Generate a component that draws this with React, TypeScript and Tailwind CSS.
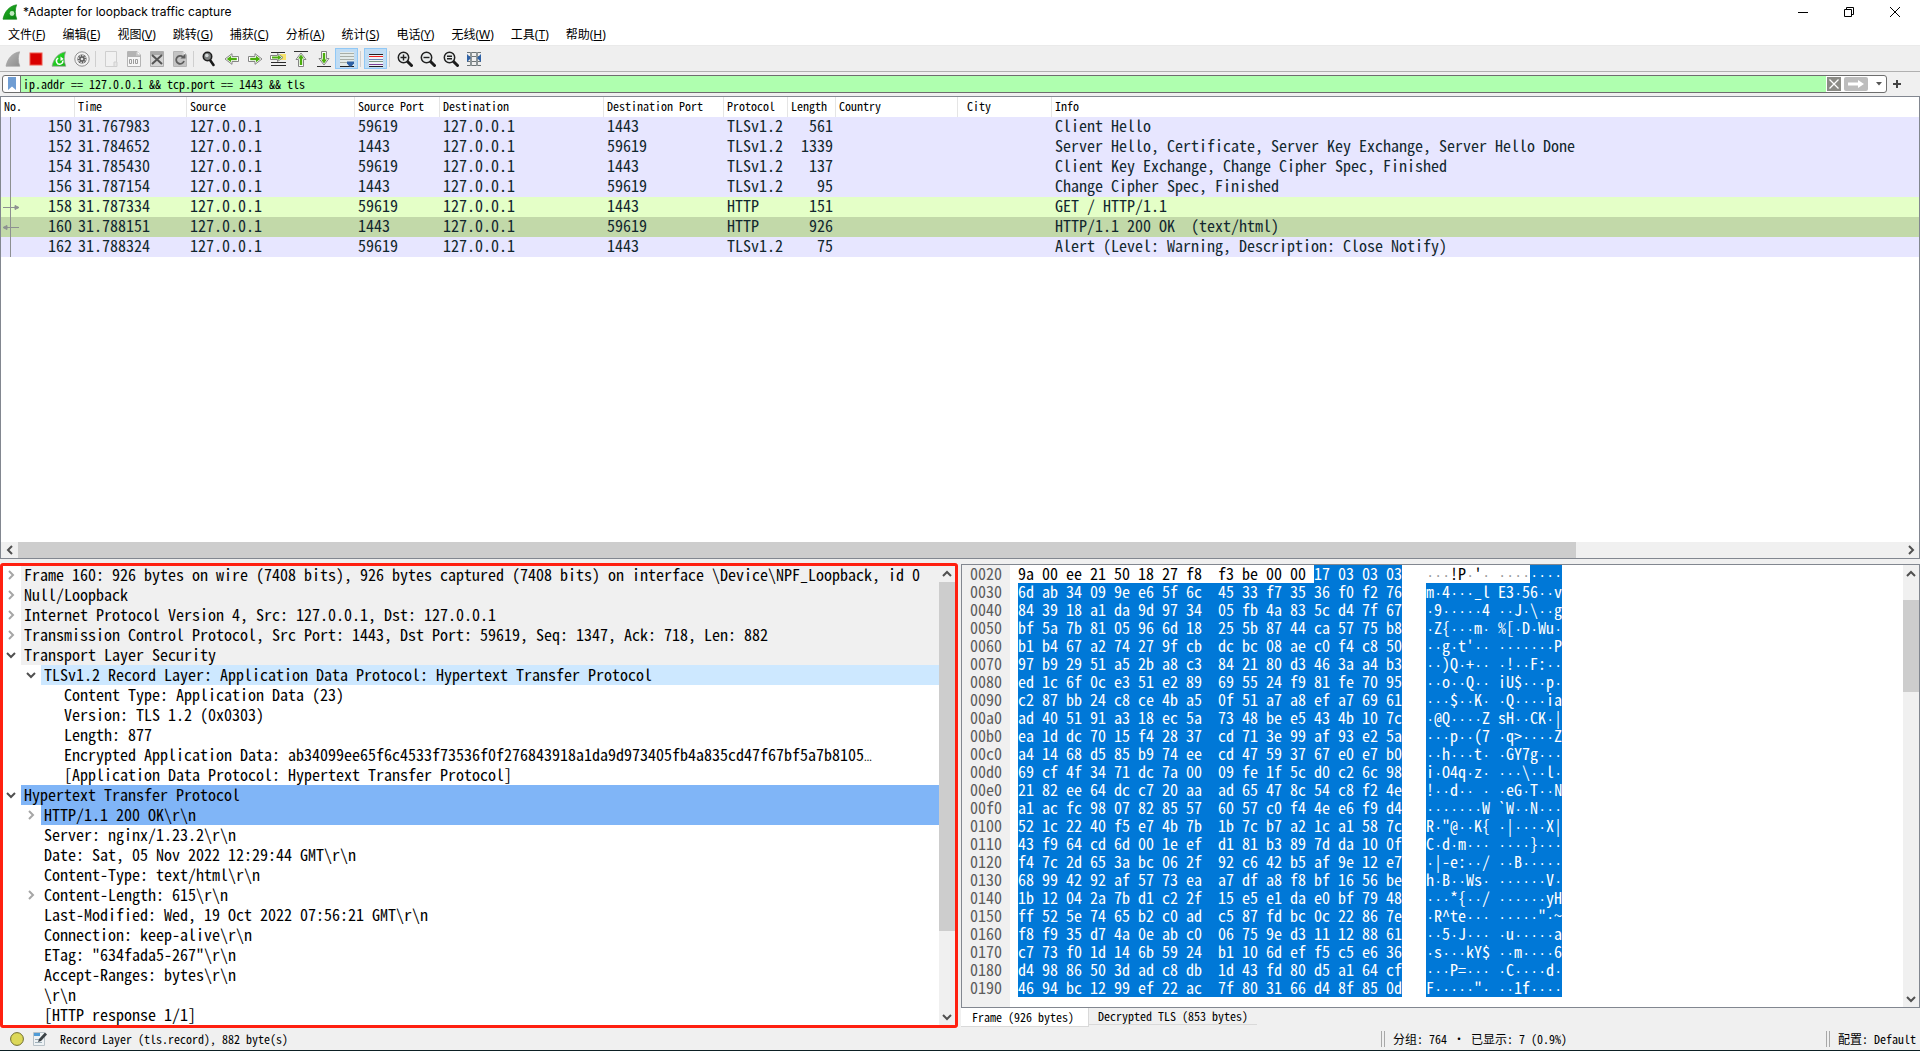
import { useState } from 'react';
import type { ReactNode } from 'react';

const MONO = "font-['Noto_Sans_Mono_CJK_SC','Liberation_Mono',monospace]";
const UI = "font-['Noto_Sans','Noto_Sans_CJK_SC',sans-serif]";

const MENUS = [
  ['文件', 'F'], ['编辑', 'E'], ['视图', 'V'], ['跳转', 'G'], ['捕获', 'C'], ['分析', 'A'],
  ['统计', 'S'], ['电话', 'Y'], ['无线', 'W'], ['工具', 'T'], ['帮助', 'H'],
];

const COLUMNS = [
  { name: 'No.', width: 'w-[74px]' },
  { name: 'Time', width: 'w-[112px]' },
  { name: 'Source', width: 'w-[168px]' },
  { name: 'Source Port', width: 'w-[85px]' },
  { name: 'Destination', width: 'w-[164px]' },
  { name: 'Destination Port', width: 'w-[120px]' },
  { name: 'Protocol', width: 'w-[64px]' },
  { name: 'Length', width: 'w-[48px]' },
  { name: 'Country', width: 'w-[122px]' },
  { name: 'City', width: 'w-[94px]' },
  { name: 'Info', width: '' },
];

interface Packet {
  no: number;
  time: string;
  sport: string;
  dport: string;
  protocol: string;
  length: number;
  info: string;
  row: string;
  arrow?: 'out' | 'in';
}

const PACKETS: Packet[] = [
  { no: 150, time: '31.767983', sport: '59619', dport: '1443', protocol: 'TLSv1.2', length: 561, info: 'Client Hello', row: 'bg-[#e7e6ff]' },
  { no: 152, time: '31.784652', sport: '1443', dport: '59619', protocol: 'TLSv1.2', length: 1339, info: 'Server Hello, Certificate, Server Key Exchange, Server Hello Done', row: 'bg-[#e7e6ff]' },
  { no: 154, time: '31.785430', sport: '59619', dport: '1443', protocol: 'TLSv1.2', length: 137, info: 'Client Key Exchange, Change Cipher Spec, Finished', row: 'bg-[#e7e6ff]' },
  { no: 156, time: '31.787154', sport: '1443', dport: '59619', protocol: 'TLSv1.2', length: 95, info: 'Change Cipher Spec, Finished', row: 'bg-[#e7e6ff]' },
  { no: 158, time: '31.787334', sport: '59619', dport: '1443', protocol: 'HTTP', length: 151, info: 'GET / HTTP/1.1', row: 'bg-[#e4ffc7]', arrow: 'out' },
  { no: 160, time: '31.788151', sport: '1443', dport: '59619', protocol: 'HTTP', length: 926, info: 'HTTP/1.1 200 OK  (text/html)', row: 'bg-[#c2d9a9]', arrow: 'in' },
  { no: 162, time: '31.788324', sport: '59619', dport: '1443', protocol: 'TLSv1.2', length: 75, info: 'Alert (Level: Warning, Description: Close Notify)', row: 'bg-[#e7e6ff]' },
];

interface TreeLine {
  level: number;
  text: string;
  state?: 'open' | 'closed';
  tone?: string;
}

const GRAY = 'bg-[#f0f0f0]';
const BLUE = 'bg-[#80b5f7]';

const TREE: TreeLine[] = [
  { level: 0, state: 'closed', tone: GRAY, text: 'Frame 160: 926 bytes on wire (7408 bits), 926 bytes captured (7408 bits) on interface \\Device\\NPF_Loopback, id 0' },
  { level: 0, state: 'closed', tone: GRAY, text: 'Null/Loopback' },
  { level: 0, state: 'closed', tone: GRAY, text: 'Internet Protocol Version 4, Src: 127.0.0.1, Dst: 127.0.0.1' },
  { level: 0, state: 'closed', tone: GRAY, text: 'Transmission Control Protocol, Src Port: 1443, Dst Port: 59619, Seq: 1347, Ack: 718, Len: 882' },
  { level: 0, state: 'open', tone: GRAY, text: 'Transport Layer Security' },
  { level: 1, state: 'open', tone: 'bg-[#cde8ff]', text: 'TLSv1.2 Record Layer: Application Data Protocol: Hypertext Transfer Protocol' },
  { level: 2, text: 'Content Type: Application Data (23)' },
  { level: 2, text: 'Version: TLS 1.2 (0x0303)' },
  { level: 2, text: 'Length: 877' },
  { level: 2, text: 'Encrypted Application Data: ab34099ee65f6c4533f73536f0f276843918a1da9d973405fb4a835cd47f67bf5a7b8105…' },
  { level: 2, text: '[Application Data Protocol: Hypertext Transfer Protocol]' },
  { level: 0, state: 'open', tone: BLUE, text: 'Hypertext Transfer Protocol' },
  { level: 1, state: 'closed', tone: BLUE, text: 'HTTP/1.1 200 OK\\r\\n' },
  { level: 1, text: 'Server: nginx/1.23.2\\r\\n' },
  { level: 1, text: 'Date: Sat, 05 Nov 2022 12:29:44 GMT\\r\\n' },
  { level: 1, text: 'Content-Type: text/html\\r\\n' },
  { level: 1, state: 'closed', text: 'Content-Length: 615\\r\\n' },
  { level: 1, text: 'Last-Modified: Wed, 19 Oct 2022 07:56:21 GMT\\r\\n' },
  { level: 1, text: 'Connection: keep-alive\\r\\n' },
  { level: 1, text: 'ETag: "634fada5-267"\\r\\n' },
  { level: 1, text: 'Accept-Ranges: bytes\\r\\n' },
  { level: 1, text: '\\r\\n' },
  { level: 1, text: '[HTTP response 1/1]' },
];

const INDENT = ['pl-0', 'pl-5', 'pl-10'];

const DUMP = [
  '9a 00 ee 21 50 18 27 f8 f3 be 00 00 17 03 03 03',
  '6d ab 34 09 9e e6 5f 6c 45 33 f7 35 36 f0 f2 76',
  '84 39 18 a1 da 9d 97 34 05 fb 4a 83 5c d4 7f 67',
  'bf 5a 7b 81 05 96 6d 18 25 5b 87 44 ca 57 75 b8',
  'b1 b4 67 a2 74 27 9f cb dc bc 08 ae c0 f4 c8 50',
  '97 b9 29 51 a5 2b a8 c3 84 21 80 d3 46 3a a4 b3',
  'ed 1c 6f 0c e3 51 e2 89 69 55 24 f9 81 fe 70 95',
  'c2 87 bb 24 c8 ce 4b a5 0f 51 a7 a8 ef a7 69 61',
  'ad 40 51 91 a3 18 ec 5a 73 48 be e5 43 4b 10 7c',
  'ea 1d dc 70 15 f4 28 37 cd 71 3e 99 af 93 e2 5a',
  'a4 14 68 d5 85 b9 74 ee cd 47 59 37 67 e0 e7 b0',
  '69 cf 4f 34 71 dc 7a 00 09 fe 1f 5c d0 c2 6c 98',
  '21 82 ee 64 dc c7 20 aa ad 65 47 8c 54 c8 f2 4e',
  'a1 ac fc 98 07 82 85 57 60 57 c0 f4 4e e6 f9 d4',
  '52 1c 22 40 f5 e7 4b 7b 1b 7c b7 a2 1c a1 58 7c',
  '43 f9 64 cd 6d 00 1e ef d1 81 b3 89 7d da 10 0f',
  'f4 7c 2d 65 3a bc 06 2f 92 c6 42 b5 af 9e 12 e7',
  '68 99 42 92 af 57 73 ea a7 df a8 f8 bf 16 56 be',
  '1b 12 04 2a 7b d1 c2 2f 15 e5 e1 da e0 bf 79 48',
  'ff 52 5e 74 65 b2 c0 ad c5 87 fd bc 0c 22 86 7e',
  'f8 f9 35 d7 4a 0e ab c0 06 75 9e d3 11 12 88 61',
  'c7 73 f0 1d 14 6b 59 24 b1 10 6d ef f5 c5 e6 36',
  'd4 98 86 50 3d ad c8 db 1d 43 fd 80 d5 a1 64 cf',
  '46 94 bc 12 99 ef 22 ac 7f 80 31 66 d4 8f 85 0d',
];

// offset 0x20, the TLS record starts 12 bytes in
const FIRST_OFFSET = 0x20;
const RECORD_START = 12;

const toHex = (row: string) => {
  const bytes = row.split(' ');
  return bytes.slice(0, 8).join(' ') + '  ' + bytes.slice(8).join(' ');
};

const toAscii = (row: string) => {
  const chars = row.split(' ').map((b) => {
    const code = parseInt(b, 16);
    return code >= 0x20 && code < 0x7f ? String.fromCharCode(code) : '·';
  });
  return chars.slice(0, 8).join('') + ' ' + chars.slice(8).join('');
};

function Glyph({ children }: { children: ReactNode }) {
  return (
    <svg viewBox="0 0 16 16" className="h-4 w-4" fill="none">
      {children}
    </svg>
  );
}

function Fin({ from, to, stroke }: { from: string; to: string; stroke: string }) {
  const id = `fin${from.slice(1)}`;
  return (
    <>
      <defs>
        <linearGradient id={id} x1="0" y1="0" x2="1" y2="1">
          <stop offset="0" stopColor={from} />
          <stop offset="1" stopColor={to} />
        </linearGradient>
      </defs>
      <path d="M1 15.2C2.4 8 7 2 14.6.8c-1.6 4-1.8 9.6.2 14.4z" fill={`url(#${id})`} stroke={stroke} strokeWidth=".7" />
    </>
  );
}

function Page({ children }: { children?: ReactNode }) {
  return (
    <>
      <path d="M1.5.5H11L14.5 4v11.5h-13z" fill="#f6f6f6" stroke="#b4b4b4" />
      <path d="M11 .5V4h3.5" stroke="#b4b4b4" fill="#fff" />
      {children}
    </>
  );
}

function Lens({ children }: { children?: ReactNode }) {
  return (
    <Glyph>
      <path d="M10 10l4.5 4.5" stroke="#1c1c1c" strokeWidth="3" strokeLinecap="round" />
      <circle cx="6.5" cy="6.5" r="5.2" fill="#e9ecec" stroke="#222" strokeWidth="1.5" />
      <g stroke="#222" strokeWidth="1.4">{children}</g>
    </Glyph>
  );
}

function ArrowShape() {
  return (
    <>
      <path d="M1.5 5.5H8V2.700L15 8l-7 5.300V10.500H1.500z" fill="#fff" stroke="#858585" />
      <path d="M3.200 8H10" stroke="#4cae0f" strokeWidth="2.400" />
      <path d="M9 4.800L13.200 8 9 11.200z" fill="#4cae0f" />
    </>
  );
}

const ICONS: Record<string, ReactNode> = {
  start: <Glyph><Fin from="#b9b9b9" to="#8d8d8d" stroke="#a0a0a0" /></Glyph>,
  stop: <Glyph><rect x="2" y="2" width="12" height="12" fill="#d90000" stroke="#ef5a4e" /></Glyph>,
  restart: (
    <Glyph>
      <Fin from="#2ee62e" to="#10b410" stroke="#9a9a9a" />
      <path d="M7.2 7.2A3.2 3.2 0 1 0 11.8 9.5" stroke="#fff" strokeWidth="1.5" />
      <path d="M9.5 5.5V10l3.2-2z" fill="#fff" />
    </Glyph>
  ),
  options: (
    <Glyph>
      <circle cx="8" cy="8" r="7.2" fill="#f2f2f2" stroke="#909090" />
      <circle cx="8" cy="8" r="4.6" fill="#5c5c5c" />
      <circle cx="8" cy="8" r="3.5" stroke="#d4d4d4" strokeWidth="1.4" strokeDasharray="1.6 1.1" />
      <circle cx="8" cy="8" r="1.3" fill="#e4e4e4" />
    </Glyph>
  ),
  open: (
    <Glyph>
      <path d="M2.5.5h11v15h-11z" fill="#f1f1f1" stroke="#cfcfcf" />
      <path d="M11 11h3v4.5h-3z" fill="#e6e6e6" stroke="#cfcfcf" />
    </Glyph>
  ),
  save: (
    <Glyph>
      <Page>
        <path d="M2 1h8.5v3.5H14V6H2z" fill="#b3b3b3" />
        <path d="M3.5 8.5h2v4h-2zM7.5 8v5M9.5 8.5h2v4h-2z" stroke="#9d9d9d" />
      </Page>
    </Glyph>
  ),
  close: (
    <Glyph>
      <path d="M1.5.5h13v15h-13z" fill="#d4d4d4" stroke="#adadad" />
      <path d="M2 1h12v3H2z" fill="#a9a9a9" />
      <path d="M3 4l10 9M13 4L3 13" stroke="#555" strokeWidth="2" />
    </Glyph>
  ),
  reload: (
    <Glyph>
      <Page>
        <path d="M2 1h8.5v3.5H14V15H2z" fill="#c4c4c4" />
        <path d="M11 6A4 4 0 1 0 12 10" stroke="#5e5e5e" strokeWidth="1.8" />
        <path d="M8.5 7.5h5v-5z" fill="#5e5e5e" />
      </Page>
    </Glyph>
  ),
  find: (
    <Glyph>
      <path d="M9 9l3.5 5" stroke="#1a1a1a" strokeWidth="2.6" strokeLinecap="round" />
      <circle cx="6.5" cy="5.5" r="4.2" fill="#7d8080" stroke="#1e1e1e" strokeWidth="1.6" />
      <circle cx="5.8" cy="4.5" r="1.8" fill="#d5d9d9" />
    </Glyph>
  ),
  back: <Glyph><g transform="matrix(-1 0 0 1 16 0)"><ArrowShape /></g></Glyph>,
  forward: <Glyph><ArrowShape /></Glyph>,
  jump: (
    <Glyph>
      <path d="M1 1.5h14M1 11.5h15M1 14.5h15" stroke="#2a2a2a" />
      <path d="M10 3h6v6h-6z" fill="#f7e36b" />
      <path d="M.5 4.5h7v-2l5.5 4-5.5 4v-2h-7z" fill="#fff" stroke="#858585" />
      <path d="M2 6.5h7" stroke="#4cae0f" strokeWidth="2" />
      <path d="M8 4l3.5 2.5L8 9z" fill="#4cae0f" />
    </Glyph>
  ),
  first: (
    <Glyph>
      <path d="M1 .5h14" stroke="#333" />
      <path d="M5.5 15.5V8.5H3L8 2l5 6.5h-2.5v7z" fill="#fff" stroke="#858585" />
      <path d="M8 14V6" stroke="#4cae0f" strokeWidth="2.4" />
      <path d="M5 7.5l3-4 3 4z" fill="#4cae0f" />
    </Glyph>
  ),
  last: (
    <Glyph>
      <path d="M1 15.5h14" stroke="#333" />
      <path d="M5.5.5v7H3L8 14l5-6.5h-2.5v-7z" fill="#fff" stroke="#858585" />
      <path d="M8 2v8" stroke="#4cae0f" strokeWidth="2.4" />
      <path d="M5 8.5l3 4 3-4z" fill="#4cae0f" />
    </Glyph>
  ),
  autoscroll: (
    <Glyph>
      <path d="M1 1h14v14H1z" fill="#e3ebe9" />
      <path d="M1 2.5h14M1 5.5h14M1 8.5h14M1 11.5h14" stroke="#a8aea6" />
      <path d="M1 15.5h14" stroke="#222" />
      <path d="M8 10.5h7v2l-2.5 3h-2L8 12.5z" fill="#2f62a6" />
    </Glyph>
  ),
  colorize: (
    <Glyph>
      <path d="M1 3h14v12H1z" fill="#eef3f6" />
      <path d="M1 3.5h14M1 15.5h14" stroke="#222" />
      <path d="M1 5.5h14" stroke="#ee2020" />
      <path d="M1 8.5h14" stroke="#6a86b8" />
      <path d="M1 10.5h14" stroke="#7d9a83" />
      <path d="M1 13.5h14" stroke="#7a3f95" />
    </Glyph>
  ),
  zoomIn: <Lens><path d="M3.5 6.5h6M6.5 3.5v6" /></Lens>,
  zoomOut: <Lens><path d="M3.5 6.5h6" /></Lens>,
  zoomReset: <Lens><path d="M4 5.2h5M4 7.8h5" /></Lens>,
  resize: (
    <Glyph>
      <path d="M1 1.5h14M1 5.5h14M1 10.5h14M1 14.5h14" stroke="#6e7577" />
      <path d="M5 1v14M11 1v14" stroke="#8c9496" strokeWidth="2" />
      <path d="M1 3l4 4-4 4zM15 3l-4 4 4 4z" fill="#2f62a6" />
    </Glyph>
  ),
};

const TOOLBAR: [string, string][][] = [
  [['start', '开始'], ['stop', '停止'], ['restart', '重新开始'], ['options', '捕获选项']],
  [['open', '打开'], ['save', '保存'], ['close', '关闭'], ['reload', '重新加载']],
  [['find', '查找'], ['back', '后退'], ['forward', '前进'], ['jump', '跳转'], ['first', '首个分组'], ['last', '最新分组'], ['autoscroll', '自动滚动']],
  [['colorize', '着色']],
  [['zoomIn', '放大'], ['zoomOut', '缩小'], ['zoomReset', '正常大小'], ['resize', '调整列宽']],
];

function Chevron({ dir, className = 'text-[#505050]' }: { dir: 'up' | 'down' | 'left' | 'right'; className?: string }) {
  const paths = {
    up: 'M1 7l4-4 4 4',
    down: 'M1 3l4 4 4-4',
    left: 'M7 1L3 5l4 4',
    right: 'M3 1l4 4-4 4',
  };
  return (
    <svg viewBox="0 0 10 10" className={`h-2.5 w-2.5 ${className}`} fill="none" stroke="currentColor" strokeWidth="2">
      <path d={paths[dir]} />
    </svg>
  );
}

function TitleBar() {
  return (
    <header className="flex h-[23px] items-center bg-white">
      <div className="ml-0.5 flex h-4 items-center gap-[5px]">
        <svg viewBox="0 0 16 16" className="h-4 w-4">
          <Fin from="#25b525" to="#0a7f12" stroke="#128a18" />
          <circle cx="10" cy="9.5" r="2.4" fill="#bfe8bf" />
        </svg>
        <h1 className="font-['Inter',sans-serif] text-xs text-black">*Adapter for loopback traffic capture</h1>
      </div>
      <div className="ml-auto flex pr-0.5">
        <button aria-label="最小化" className="flex h-5 w-[46px] items-center justify-center">
          <svg viewBox="0 0 10 10" className="h-2.5 w-2.5"><path d="M0 5.5h10" stroke="#000" /></svg>
        </button>
        <button aria-label="还原" className="flex h-5 w-[46px] items-center justify-center">
          <svg viewBox="0 0 10 10" className="h-2.5 w-2.5" fill="none" stroke="#000"><path d="M.5 2.5h7v7h-7zM2.5 2.5v-2h7v7h-2" /></svg>
        </button>
        <button aria-label="关闭窗口" className="flex h-5 w-[46px] items-center justify-center">
          <svg viewBox="0 0 10 10" className="h-2.5 w-2.5" stroke="#000"><path d="M0 0l10 10M10 0L0 10" /></svg>
        </button>
      </div>
    </header>
  );
}

function MenuBar() {
  return (
    <nav className="flex h-[23px] items-center gap-px border-b border-[#eaeaea] bg-white pt-0.5">
      {MENUS.map(([label, key]) => (
        <button key={key} className="px-2 text-xs text-black">
          {label}(<span className="underline">{key}</span>)
        </button>
      ))}
    </nav>
  );
}

function Toolbar() {
  return (
    <div className="flex h-[26px] items-center border-b border-[#b0b0b0] bg-[#efefef] pl-px">
      {TOOLBAR.map((group, i) => (
        <div key={i} className="flex items-center">
          {i > 0 && <span className="mr-[3px] ml-0.5 h-4 w-px bg-[#cfcfcf]" />}
          {group.map(([icon, label]) => (
            <button
              key={icon}
              aria-label={label}
              className={`flex h-[21px] w-[23px] items-center justify-center ${
                icon === 'autoscroll' || icon === 'colorize' ? 'border border-[#90c8f6] bg-[#c0dcf3]' : ''
              }`}
            >
              {ICONS[icon]}
            </button>
          ))}
        </div>
      ))}
    </div>
  );
}

function FilterBar() {
  const [filter, setFilter] = useState('ip.addr == 127.0.0.1 && tcp.port == 1443 && tls');
  return (
    <div className="flex h-6 items-center bg-[#f0f0f0] pl-0.5">
      <div className="flex h-[18px] flex-1 items-center overflow-hidden rounded-[3px] border border-[#6e6e6e] bg-white">
        <button aria-label="书签" className="flex h-full w-[18px] items-center justify-center border-r border-[#6e6e6e]">
          <svg viewBox="0 0 10 14" className="h-3.5 w-2.5"><path d="M1 0h8v13L5 9.5 1 13z" fill="#6f9dd3" /></svg>
        </button>
        <input
          aria-label="显示过滤器"
          value={filter}
          onChange={(e) => setFilter(e.target.value)}
          className={`h-full min-w-0 flex-1 bg-[#afffaf] pb-0.5 pl-0.5 text-xs leading-none text-black outline-none ${MONO}`}
        />
        <button aria-label="清除" className="ml-px flex h-3.5 w-3.5 items-center justify-center bg-[#8b8b86]">
          <svg viewBox="0 0 10 10" className="h-2.5 w-2.5" stroke="#fff" strokeWidth="1.3"><path d="M.5.5l9 9M9.5.5l-9 9" /></svg>
        </button>
        <button aria-label="应用" className="ml-[3px] flex h-3.5 w-6 items-center justify-center rounded-xs bg-[#bdbdbd]">
          <svg viewBox="0 0 16 8" className="h-2 w-4"><path d="M0 2.5h10V0l6 4-6 4V5.5H0z" fill="#fff" /></svg>
        </button>
        <button aria-label="历史" className="flex h-full w-[18px] items-center justify-center pl-1">
          <svg viewBox="0 0 6 4" className="h-1 w-1.5"><path d="M0 0h6L3 3.5z" fill="#555" /></svg>
        </button>
      </div>
      <button aria-label="添加按钮" className="flex h-full w-[33px] items-center pl-1.5">
        <svg viewBox="0 0 8 8" className="h-2 w-2" stroke="#444" strokeWidth="2"><path d="M0 4h8M4 0v8" /></svg>
      </button>
    </div>
  );
}

function PacketList() {
  return (
    <section className="flex min-h-0 flex-1 flex-col border border-[#828790] bg-white">
      <div className="min-h-0 flex-1">
        <table className={`w-full table-fixed border-separate border-spacing-0 text-left text-[#12272e] ${MONO}`}>
          <thead>
            <tr className="h-5 bg-white text-xs leading-[18px] text-black">
              {COLUMNS.map((c) => (
                <th
                  key={c.name}
                  className={`border-r border-[#e5e5e5] p-0 align-top font-normal whitespace-nowrap last:border-r-0 ${c.name === 'City' ? 'pl-[9px]' : 'pl-[3px]'} ${c.width}`}
                >
                  {c.name}
                </th>
              ))}
            </tr>
          </thead>
          <tbody>
            {PACKETS.map((p) => (
              <tr key={p.no} className={`h-5 text-base leading-4 whitespace-pre *:p-0 *:align-top ${p.row}`}>
                <td>
                  <div className="flex h-5 justify-between pr-[3px]">
                    <svg viewBox="0 0 20 20" className="h-5 w-5" stroke="#8d9091" fill="#8d9091">
                      <path d="M9.5 0v20" />
                      {p.arrow === 'out' && <path d="M2 10.5h12M14 8.5l4 2-4 2z" />}
                      {p.arrow === 'in' && <path d="M18 10.5H6M6 8.5l-4 2 4 2z" />}
                    </svg>
                    {p.no}
                  </div>
                </td>
                <td><span className="ml-[3px]">{p.time}</span></td>
                <td><span className="ml-[3px]">127.0.0.1</span></td>
                <td><span className="ml-[3px]">{p.sport}</span></td>
                <td><span className="ml-[3px]">127.0.0.1</span></td>
                <td><span className="ml-[3px]">{p.dport}</span></td>
                <td><span className="ml-[3px]">{p.protocol}</span></td>
                <td className="text-right"><span className="mr-[3px]">{p.length}</span></td>
                <td />
                <td />
                <td><span className="ml-[3px]">{p.info}</span></td>
              </tr>
            ))}
          </tbody>
        </table>
      </div>
      <div className="flex h-4 items-center bg-[#f0f0f0]">
        <span className="flex w-[17px] justify-center"><Chevron dir="left" /></span>
        <span className="h-full flex-43 bg-[#cdcdcd]" />
        <span className="flex-9" />
        <span className="flex w-[17px] justify-center"><Chevron dir="right" /></span>
      </div>
    </section>
  );
}

function TreeText({ text }: { text: string }) {
  if (!text.endsWith('…')) return <>{text}</>;
  return (
    <>
      {text.slice(0, -1)}
      <span className="font-['Noto_Sans'] text-[10px]">…</span>
    </>
  );
}

function DetailTree() {
  return (
    <section className="relative flex w-[958px] shrink-0 bg-white pt-0.5 pr-[3px] pb-[3px] pl-px">
      <ul className={`min-w-0 flex-1 text-base leading-[18px] text-black ${MONO}`}>
        {TREE.map((line, i) => (
          <li key={i} className={`flex h-5 whitespace-pre ${INDENT[line.level]}`}>
            <span className="flex w-5 shrink-0 items-center justify-center">
              {line.state === 'open' && <Chevron dir="down" />}
              {line.state === 'closed' && <Chevron dir="right" className="text-[#a6a6a6]" />}
            </span>
            <span className={`flex-1 pl-[3px] ${line.tone ?? ''}`}><TreeText text={line.text} /></span>
          </li>
        ))}
      </ul>
      <div className="flex w-4 flex-col items-center bg-[#f0f0f0]">
        <span className="flex h-[17px] items-center"><Chevron dir="up" /></span>
        <span className="flex w-full flex-1 flex-col"><span className="h-[82%] w-full bg-[#cdcdcd]" /></span>
        <span className="flex h-[17px] items-center"><Chevron dir="down" /></span>
      </div>
      <div className="pointer-events-none absolute inset-0 rounded-[3px] border-3 border-[#ff2010]" />
    </section>
  );
}

// unprintable bytes show as dots, each as wide as one character
function Cells({ text, dot = '' }: { text: string; dot?: string }) {
  return (
    <>
      {text.split(/(·)/).map((part, i) =>
        part === '·' ? (
          <span key={i} className={`inline-block w-2 text-center font-['Liberation_Mono'] text-[13px] leading-4 ${dot}`}>·</span>
        ) : (
          part
        ),
      )}
    </>
  );
}

function DumpColumn({ lines, split, className }: { lines: string[]; split: number; className: string }) {
  const [first, ...rest] = lines;
  return (
    <div className={className}>
      <div className="flex h-[18px]">
        <span className="text-black"><Cells text={first.slice(0, split)} dot="text-[#999]" /></span>
        <span className="bg-[#0078d7] text-white"><Cells text={first.slice(split)} /></span>
      </div>
      <div className="bg-[#0078d7] text-white">
        {rest.map((line, i) => (
          <div key={i} className="h-[18px]"><Cells text={line} /></div>
        ))}
      </div>
    </div>
  );
}

function HexView() {
  return (
    <section className="flex min-w-0 flex-1 flex-col pt-px">
      <div className="flex flex-1 border border-[#828790] bg-white">
        <div className={`flex flex-1 text-base leading-4 whitespace-pre ${MONO}`}>
          <div className="w-12 bg-[#f0f0f0] pl-2 text-[#5c5c5c]">
            {DUMP.map((_, i) => (
              <div key={i} className="h-[18px]">
                {(FIRST_OFFSET + i * 16).toString(16).padStart(4, '0')}
              </div>
            ))}
          </div>
          <DumpColumn className="ml-2" lines={DUMP.map(toHex)} split={RECORD_START * 3 + 1} />
          <DumpColumn className="ml-6" lines={DUMP.map(toAscii)} split={RECORD_START + 1} />
        </div>
        <div className="flex w-4 flex-col items-center bg-[#f0f0f0]">
          <span className="flex h-[17px] items-center"><Chevron dir="up" /></span>
          <span className="flex w-full flex-1 flex-col"><span className="mt-[18px] h-[92px] w-full bg-[#cdcdcd]" /></span>
          <span className="flex h-[17px] items-center"><Chevron dir="down" /></span>
        </div>
      </div>
      <div className={`flex h-5 items-start text-xs leading-4 text-black ${MONO}`}>
        <button className="h-[19px] border-r border-b border-[#d9d9d9] bg-white pr-3.5 pl-[11px]">Frame (926 bytes)</button>
        <button className="h-[17px] border-b border-[#d9d9d9] px-[9px]">Decrypted TLS (853 bytes)</button>
      </div>
    </section>
  );
}

function StatusBar() {
  return (
    <footer className={`flex h-[23px] items-center border-b border-[#0d2024] bg-[#f0f0f0] pl-2.5 text-xs text-black ${MONO}`}>
      <button aria-label="专家信息">
        <svg viewBox="0 0 14 14" className="h-3.5 w-3.5"><circle cx="7" cy="7" r="6.4" fill="#dcd858" stroke="#6e6c30" /></svg>
      </button>
      <button aria-label="注释" className="ml-2">
        <svg viewBox="0 0 16 16" className="h-4 w-4">
          <path d="M1.5 1.5h11v13h-11z" fill="#eef2f4" stroke="#b9c2c8" />
          <path d="M2 2h6v3H2z" fill="#4f9bd6" />
          <path d="M3 8.5h6M3 11.5h7" stroke="#9fb0ba" />
          <path d="M6 11l1-3 6-6.5 2 2L9 10z" fill="#3c4246" />
        </svg>
      </button>
      <span className="ml-3">Record Layer (tls.record), 882 byte(s)</span>
      <span className="mr-2 ml-auto h-4 w-1 border-x border-[#a8a8a8]" />
      <span className="w-[433px]">分组: 764 · 已显示: 7 (0.9%)</span>
      <span className="mr-2 h-4 w-1 border-x border-[#a8a8a8]" />
      <span className="pr-1">配置: Default</span>
    </footer>
  );
}

export default function App() {
  return (
    <main className={`flex h-screen flex-col overflow-hidden bg-[#f0f0f0] ${UI}`}>
      <TitleBar />
      <MenuBar />
      <Toolbar />
      <FilterBar />
      <PacketList />
      <div className="mt-1 flex gap-[3px]">
        <DetailTree />
        <HexView />
      </div>
      <StatusBar />
    </main>
  );
}
